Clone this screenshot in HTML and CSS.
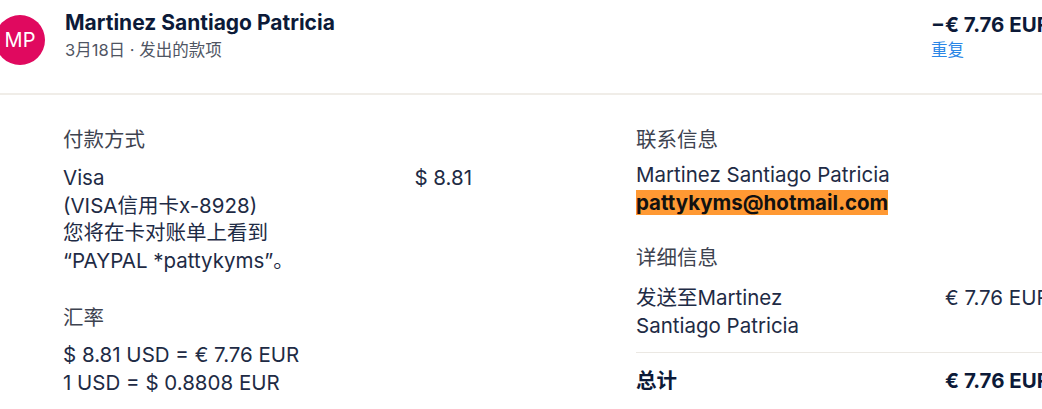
FILE: index.html
```html
<!DOCTYPE html>
<html lang="zh-CN">
<head>
<meta charset="utf-8">
<title>交易详情</title>
<link rel="stylesheet" href="styles.css">
</head>
<body>
<div class="page">
  <header class="txn-header">
    <div class="avatar">MP</div>
    <div class="txn-who">
      <div class="txn-name">Martinez Santiago Patricia</div>
      <div class="txn-meta">3月18日 · 发出的款项</div>
    </div>
    <div class="txn-amount">
      <div class="amount-main">−€ 7.76 EUR</div>
      <a class="repeat-link" href="#">重复</a>
    </div>
  </header>

  <main class="details">
    <section class="col col-left">
      <h2 class="sec-title">付款方式</h2>
      <div class="pay-row">
        <div class="pay-desc">
          <div>Visa</div>
          <div>(VISA信用卡x-8928)</div>
          <div class="pay-note">您将在卡对账单上看到 “PAYPAL *pattykyms”。</div>
        </div>
        <div class="pay-amt">$ 8.81</div>
      </div>

      <h2 class="sec-title sec-gap">汇率</h2>
      <div class="rate">
        <div>$ 8.81 USD = € 7.76 EUR</div>
        <div>1 USD = $ 0.8808 EUR</div>
      </div>
    </section>

    <section class="col col-right">
      <h2 class="sec-title">联系信息</h2>
      <div class="contact">
        <div>Martinez Santiago Patricia</div>
        <div><span class="email">pattykyms@hotmail.com</span></div>
      </div>

      <h2 class="sec-title sec-gap2">详细信息</h2>
      <div class="line-row">
        <div class="line-label">发送至Martinez Santiago Patricia</div>
        <div class="line-amt">€ 7.76 EUR</div>
      </div>
      <div class="divider"></div>
      <div class="line-row total">
        <div class="line-label">总计</div>
        <div class="line-amt">€ 7.76 EUR</div>
      </div>
    </section>
  </main>
</div>
</body>
</html>
```

FILE: styles.css
```css
html, body {
  margin: 0;
  padding: 0;
  background: #ffffff;
  overflow: hidden;
}

body {
  font-family: Inter, "Noto Sans CJK SC", sans-serif;
  color: #1e2b45;
}

.page {
  width: 1061px;
}

/* header */
.txn-header {
  display: flex;
  align-items: flex-start;
  height: 93px;
  border-bottom: 2px solid #f0ede8;
}

.avatar {
  width: 50px;
  height: 50px;
  border-radius: 50%;
  background: #e0095f;
  color: #ffffff;
  font-size: 20px;
  display: flex;
  align-items: center;
  justify-content: center;
  margin: 15px 0 0 -5px;
  flex-shrink: 0;
}

.txn-who {
  margin-left: 20px;
  padding-top: 11px;
  flex: 1;
}

.txn-name {
  font-size: 21px;
  line-height: 24px;
  font-weight: 700;
  color: #0c1a38;
}

.txn-meta {
  margin-top: 4px;
  font-size: 16.5px;
  line-height: 22px;
  color: #4f5563;
}

.txn-amount {
  width: 130px;
  padding-top: 13px;
}

.amount-main {
  font-size: 20.5px;
  line-height: 24px;
  font-weight: 700;
  color: #0c1a38;
  white-space: nowrap;
}

.repeat-link {
  display: block;
  margin-top: 2px;
  font-size: 16.5px;
  line-height: 22px;
  color: #2b86e6;
  text-decoration: none;
}

/* body */
.details {
  display: flex;
  padding: 31px 0 0 63px;
  gap: 164px;
}

.col {
  font-size: 20.5px;
  line-height: 27.5px;
}

.col-left {
  width: 409px;
}

.col-right {
  width: 414px;
}

.sec-title {
  margin: 0;
  font-size: 20.5px;
  line-height: 27.5px;
  font-weight: 400;
  color: #3e4350;
}

.sec-gap {
  margin-top: 30px;
}

.sec-gap2 {
  margin-top: 28px;
}

.pay-row {
  display: flex;
  justify-content: space-between;
  margin-top: 10.5px;
}

.pay-note {
  width: 245px;
}

.rate {
  margin-top: 9.5px;
}

.contact {
  margin-top: 7.5px;
}

.email {
  font-weight: 700;
  color: #111111;
  background: #ff9933;
}

.line-row {
  display: flex;
  justify-content: space-between;
  margin-top: 12.5px;
}

.line-label {
  width: 200px;
}

.line-amt {
  width: 105px;
  white-space: nowrap;
}

.divider {
  margin-top: 13px;
  height: 1px;
  background: #ebe8e3;
}

.total {
  margin-top: 14px;
  font-weight: 700;
  color: #0c1a38;
}
```
